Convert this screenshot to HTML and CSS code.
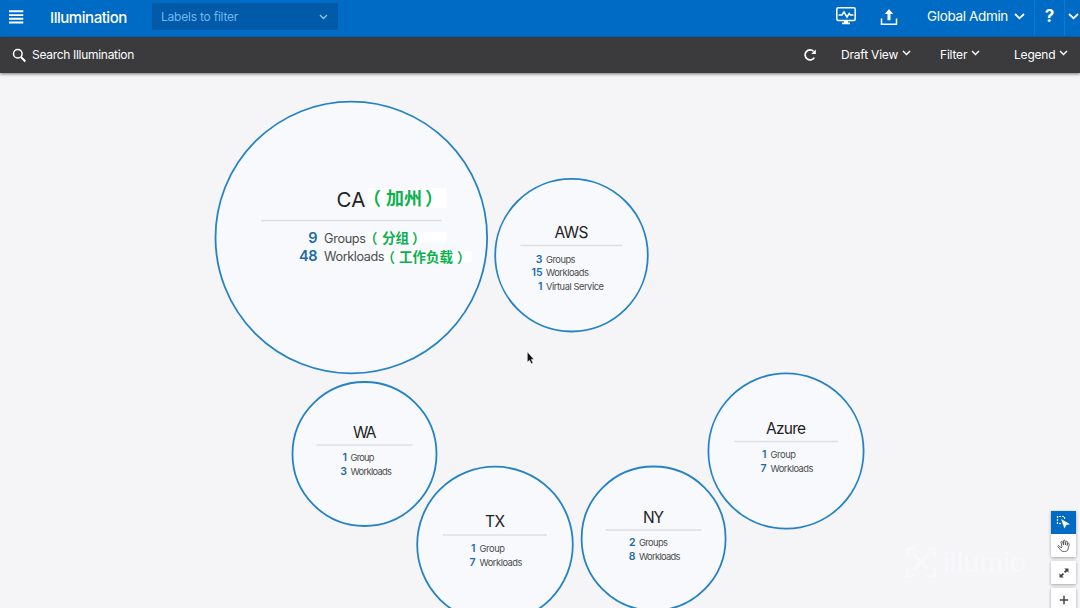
FILE: index.html
```html
<!DOCTYPE html>
<html lang="en">
<head>
<meta charset="utf-8">
<title>Illumination</title>
<link rel="stylesheet" href="styles.css">
</head>
<body>
<div class="app">
  <header class="topbar">
    <svg class="menu" width="16" height="14" viewBox="0 0 16 14"><path d="M1 1.3H15.3M1 5.1H15.3M1 8.8H15.3M1 12.5H15.3" stroke="#fff" stroke-width="1.9"/></svg>
    <h1 class="title">Illumination</h1>
    <div class="labels"><span>Labels to filter</span><svg width="9" height="6" viewBox="0 0 9 6"><path d="M1 1L4.5 4.5L8 1" class="chev light"/></svg></div>
    <div class="spacer"></div>
    <svg class="monitor" width="20" height="18" viewBox="0 0 20 18"><rect x=".8" y=".8" width="18.4" height="12.8" rx="1.5" class="line"/><path d="M2.5 8H6L8 5L11 10L13.2 6.5L14.5 8H17.5" class="line"/><path d="M8 14H12V15.5H14V17.2H6V15.5H8Z" fill="#fff"/></svg>
    <svg class="upload" width="18" height="18" viewBox="0 0 18 18"><path d="M1.5 10.5V16.2H16.5V10.5" class="line"/><path d="M9 1L13.2 6H10.5V12.2H7.5V6H4.8Z" fill="#fff"/></svg>
    <div class="user"><span>Global Admin</span><svg width="11" height="7" viewBox="0 0 11 7"><path d="M1 1L5.5 5.3L10 1" class="chev"/></svg></div>
    <div class="help">?</div>
    <div class="more"><svg width="11" height="7" viewBox="0 0 11 7"><path d="M1 1L5.5 5.3L10 1" class="chev"/></svg></div>
  </header>
  <nav class="toolbar">
    <svg class="search" width="15" height="15" viewBox="0 0 15 15"><circle cx="5.8" cy="5.8" r="4.3" class="line"/><path d="M9 9L13.3 13.5" stroke="#fff" stroke-width="2"/></svg>
    <span class="find">Search Illumination</span>
    <div class="spacer"></div>
    <svg class="refresh" width="14" height="14" viewBox="0 0 14 14"><path d="M11.3 9.6A5 5 0 1 1 10.6 3.3" stroke="#fff" stroke-width="1.7" fill="none"/><path d="M12.800 1.500V6H8.300Z" fill="#fff"/></svg>
    <div class="item draft"><span>Draft View</span><svg width="9" height="6" viewBox="0 0 9 6"><path d="M1 1L4.500 4.500L8 1" class="chev thin"/></svg></div>
    <div class="item filter"><span>Filter</span><svg width="9" height="6" viewBox="0 0 9 6"><path d="M1 1L4.500 4.500L8 1" class="chev thin"/></svg></div>
    <div class="item legend"><span>Legend</span><svg width="9" height="6" viewBox="0 0 9 6"><path d="M1 1L4.500 4.500L8 1" class="chev thin"/></svg></div>
  </nav>
  <main class="canvas">
    <svg class="map" width="1080" height="535" viewBox="0 73 1080 535">
      <g class="bubbles">
        <circle cx="351.3" cy="237.5" r="135.8"/>
        <circle cx="571.5" cy="255.2" r="76.3"/>
        <circle cx="364.5" cy="454" r="72"/>
        <circle cx="495" cy="544.5" r="77.8"/>
        <circle cx="653.6" cy="538.5" r="72"/>
        <circle cx="786" cy="451" r="77.6"/>
      </g>
      <path class="rule" d="M261 220.5H441.500M520.500 245.500H622.500M316.500 445H412.500M443 535H547M605.500 530H701.500M734 441.500H838"/>

      <text class="name big" x="336.500" y="206.500" textLength="29">CA</text>
      <g class="label big">
        <text class="n" x="317.500" y="243">9</text><text x="324" y="243" textLength="42">Groups</text>
        <text class="n" x="317.500" y="261" textLength="18.500">48</text><text x="324" y="261" textLength="60.500">Workloads</text>
      </g>
      <path fill="#fff" d="M368 188H446.700V207.800H368ZM368 232H446.700V242.500H368ZM385 251H471.500V262H385Z"/>
      <g class="note">
        <text font-size="18" x="363 386 404 425" y="205">（加州）</text>
        <text font-size="13.500" x="364 382 395.500 412" y="243">（分组）</text>
        <text font-size="13.500" x="381.500 399 412.500 426 439.500 457" y="262">（工作负载）</text>
      </g>

      <text class="name" x="554.500" y="238" textLength="34">AWS</text>
      <g class="label">
        <text class="n" x="542.500" y="262.500">3</text><text x="546" y="262.500" textLength="29.500">Groups</text>
        <text class="n" x="542.500" y="276.300">15</text><text x="546" y="276.300" textLength="43">Workloads</text>
        <text class="n" x="542.500" y="290.200">1</text><text x="546" y="290.200" textLength="58">Virtual Service</text>
      </g>

      <text class="name" x="353" y="438" textLength="23.500">WA</text>
      <g class="label">
        <text class="n" x="347" y="461.300">1</text><text x="350.500" y="461.300" textLength="24">Group</text>
        <text class="n" x="347" y="475">3</text><text x="350.500" y="475" textLength="41.500">Workloads</text>
      </g>

      <text class="name" x="485" y="527.300" textLength="20">TX</text>
      <g class="label">
        <text class="n" x="475.500" y="552">1</text><text x="479.500" y="552" textLength="25.500">Group</text>
        <text class="n" x="475.500" y="565.700">7</text><text x="479.500" y="565.700" textLength="43">Workloads</text>
      </g>

      <text class="name" x="643" y="522.800" textLength="21">NY</text>
      <g class="label">
        <text class="n" x="635.500" y="546.300">2</text><text x="639" y="546.300" textLength="29">Groups</text>
        <text class="n" x="635.500" y="559.700">8</text><text x="639" y="559.700" textLength="41.500">Workloads</text>
      </g>

      <text class="name" x="766" y="434" textLength="40">Azure</text>
      <g class="label">
        <text class="n" x="766.500" y="458.200">1</text><text x="770.500" y="458.200" textLength="25.500">Group</text>
        <text class="n" x="766.500" y="472.200">7</text><text x="770.500" y="472.200" textLength="43">Workloads</text>
      </g>

      <g class="brand">
        <path d="M915 549H907.500V557M907.500 568V576H915M927 549H935V557M935 568V576H927M914 555L928 569M928 555L914 569"/>
        <text x="943" y="572" textLength="83">illumio</text>
      </g>
      <path class="pointer" d="M527.300 351.800V362.300L529.500 360.200L531.300 363.700L533 362.900L531.300 359.500H534Z"/>
    </svg>
    <div class="tools">
      <div class="group">
        <div class="tool active"><svg width="15" height="15" viewBox="0 0 15 15"><path d="M5 8.500H1.500V1.500H8.500V4.500" fill="none" stroke="#fff" stroke-width="1.200" stroke-dasharray="2 1"/><path d="M5 4L14 9.300L10.300 10L8.500 13.500Z" fill="#fff"/></svg></div>
        <div class="tool"><svg width="14" height="14" viewBox="0 0 14 14"><path d="M4.300 9L2.200 6.800C1.200 6 .5 7 1.200 8L4 11.500C5 13 9.800 13 10.800 11L12.200 5.500C12.500 4 11 3.700 10.600 5L10.200 6.500L10.500 3.200C10.500 1.800 9 1.800 8.800 3.200L8.400 6L8.100 2C8 .7 6.500 .7 6.500 2V6L5.600 3C5.200 1.800 3.800 2.200 4 3.500L4.900 7.500L4.300 9" fill="none" stroke="#555" stroke-width=".9"/></svg></div>
      </div>
      <div class="group"><div class="tool"><svg width="10" height="10" viewBox="0 0 10 10"><path d="M5.300 .5H9.500V4.700L8.100 3.300L6.300 5.100L4.900 3.700L6.700 1.900ZM.5 5.300V9.500H4.700L3.300 8.100L5.100 6.300L3.700 4.900L1.900 6.700Z" fill="#444"/></svg></div></div>
      <div class="group"><div class="tool"><svg width="10" height="10" viewBox="0 0 10 10"><path d="M5 .8V9.200M.8 5H9.200" stroke="#444" stroke-width="1.500"/></svg></div></div>
    </div>
  </main>
</div>
</body>
</html>
```
FILE: styles.css
```css
body { margin: 0; font-family: Inter, "Noto Sans CJK SC", sans-serif; }
.app { width: 1080px; height: 608px; overflow: hidden; display: flex; flex-direction: column; background: #f5f5f8; }
svg { display: block; flex: none; }
.spacer { flex: 1; }
.line { fill: none; stroke: #fff; stroke-width: 1.5; }
.chev { fill: none; stroke: #fff; stroke-width: 1.8; }
.chev.thin { stroke-width: 1.5; }
.chev.light { stroke: #8cc8f5; stroke-width: 1.4; }

.topbar { flex: none; height: 36.5px; display: flex; align-items: center; background: #006bc4; color: #fff; box-sizing: border-box; padding: 0 0 2px 8px; }
.menu { margin-right: 26px; }
.title { margin: 0; width: 102px; font-size: 15px; font-weight: 500; white-space: nowrap; letter-spacing: -.45px; }
.labels { box-sizing: border-box; width: 186px; height: 27px; margin-top: -1px; padding: 0 10px 0 9px; border-radius: 2px; background: #005aa7; color: #70b8f0; display: flex; align-items: center; justify-content: space-between; font-size: 12px; letter-spacing: -.22px; }
.monitor { margin: -3px 24px 0 0; }
.upload { margin: -1px 29px 0 0; }
.user { display: flex; align-items: center; gap: 6px; width: 107px; height: 32px; padding-bottom: 2px; font-size: 13.500px; white-space: nowrap; letter-spacing: -.35px; }
.help { box-sizing: border-box; width: 31px; height: 36px; margin-bottom: -2px; line-height: 32px; border: solid #087bd6; border-width: 0 1px; text-align: center; font-size: 17px; font-weight: 700; }
.more { width: 15px; padding: 0 0 2px 3px; box-sizing: border-box; }

.toolbar { flex: none; position: relative; height: 36.5px; display: flex; align-items: center; box-sizing: border-box; padding-left: 12px; background: #3b3b3d; color: #fff; font-size: 12px; letter-spacing: -.2px; box-shadow: 0 1px 3px #0008; }
.search { margin: 1px 5px 0 0; }
.find { letter-spacing: -.3px; }
.refresh { margin-right: 24px; }
.item { display: flex; align-items: center; gap: 4px; white-space: nowrap; padding-bottom: 1px; }
.item svg { margin-top: -3px; }
.draft { width: 99px; }
.filter { width: 74px; }
.legend { width: 66px; }

.canvas { flex: 1; min-height: 0; display: grid; }
.canvas > * { grid-area: 1 / 1; }
.bubbles { fill: #f7f9fd; stroke: #2583c4; stroke-width: 1.8; }
.rule { stroke: #dcdfe4; stroke-width: 1.3; }
.name { font-size: 15.500px; fill: #222; }
.name.big { font-size: 20.500px; }
.label { font-size: 9.300px; fill: #4c4c4c; }
.label .n { font-size: 10.500px; font-weight: 600; fill: #1c6ba5; text-anchor: end; }
.label.big { font-size: 12.700px; }
.label.big .n { font-size: 14.500px; }
.note { font-family: "Noto Sans CJK SC", sans-serif; font-weight: 700; fill: #0bb04f; }
.brand path { fill: none; stroke: #f8f8fa; stroke-width: 3; }
.brand text { font-size: 27px; font-weight: 500; fill: #f8f8fa; }
.pointer { fill: #111; stroke: #fff; stroke-width: .5; }

.tools { justify-self: end; width: 25px; margin: 438px 4px 0 0; display: flex; flex-direction: column; gap: 4px; }
.group { background: #fff; box-shadow: 0 1px 3px #0005; }
.tool { height: 23px; display: flex; align-items: center; justify-content: center; }
.tool.active { background: #006bc4; }
```
